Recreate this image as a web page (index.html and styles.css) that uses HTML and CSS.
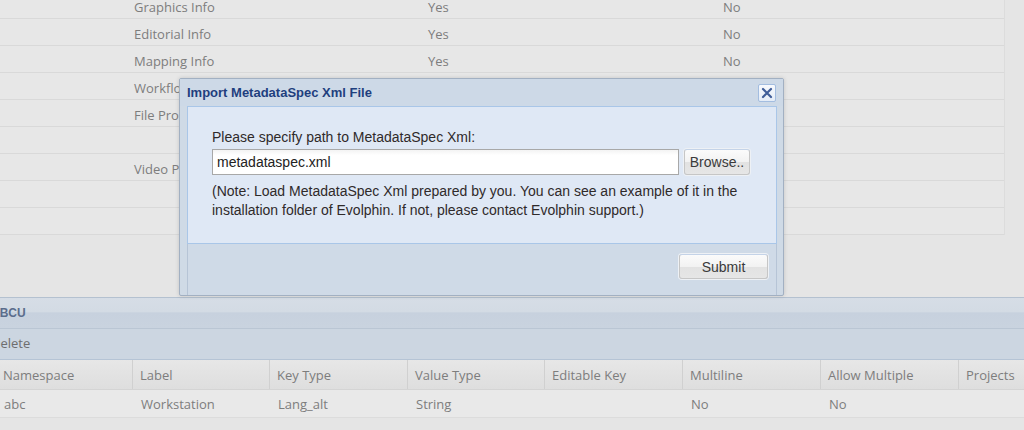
FILE: index.html
```html
<!DOCTYPE html>
<html>
<head>
<meta charset="utf-8">
<title>Import MetadataSpec Xml File</title>
<link rel="stylesheet" href="styles.css">
</head>
<body>
<div class="page">
  <div class="top">
    <div class="rows">
      <div class="row"><span></span><span>Graphics Info</span><span>Yes</span><span>No</span></div>
      <div class="row"><span></span><span>Editorial Info</span><span>Yes</span><span>No</span></div>
      <div class="row"><span></span><span>Mapping Info</span><span>Yes</span><span>No</span></div>
      <div class="row"><span></span><span class="under">Workflow Info</span><span></span><span></span></div>
      <div class="row"><span></span><span class="under">File Properties</span><span></span><span></span></div>
      <div class="row"><span></span><span></span><span></span><span></span></div>
      <div class="row"><span></span><span class="under">Video Properties</span><span></span><span></span></div>
      <div class="row"><span></span><span></span><span></span><span></span></div>
      <div class="row"><span></span><span></span><span></span><span></span></div>
    </div>
  </div>

  <div class="panel">
    <div class="panel-head"><span class="clip-a">ABCU</span></div>
    <div class="toolbar"><span class="clip-d">Delete</span></div>
    <div class="grid">
      <div class="grid-row head">
        <span>Namespace</span><span>Label</span><span>Key Type</span><span>Value Type</span><span>Editable Key</span><span>Multiline</span><span>Allow Multiple</span><span>Projects</span>
      </div>
      <div class="grid-row data">
        <span>abc</span><span>Workstation</span><span>Lang_alt</span><span>String</span><span></span><span>No</span><span>No</span><span></span>
      </div>
    </div>
  </div>
</div>

<div class="dialog">
  <div class="dlg-title">
    <span>Import MetadataSpec Xml File</span>
    <button class="dlg-close" aria-label="Close">
      <svg width="12" height="12" viewBox="0 0 12 12"><path d="M2 2 L10 10 M10 2 L2 10" stroke="#3f5d98" stroke-width="2.2" stroke-linecap="round"/></svg>
    </button>
  </div>
  <div class="dlg-frame">
    <div class="dlg-body">
      <div class="dlg-label">Please specify path to MetadataSpec Xml:</div>
      <div class="dlg-file">
        <div class="dlg-input">metadataspec.xml</div>
        <button class="btn btn-browse">Browse..</button>
      </div>
      <div class="dlg-note">(Note: Load MetadataSpec Xml prepared by you. You can see an example of it in the installation folder of Evolphin. If not, please contact Evolphin support.)</div>
    </div>
    <div class="dlg-foot">
      <button class="btn btn-submit">Submit</button>
    </div>
  </div>
</div>
</body>
</html>
```

FILE: styles.css
```css
html, body {
  margin: 0;
  padding: 0;
}
body {
  width: 1024px;
  height: 430px;
  overflow: hidden;
  background: #e5e5e5;
  font-family: "Open Sans", "Liberation Sans", sans-serif;
  font-size: 13px;
  color: #7d7d7d;
  position: relative;
}
.page {
  display: flex;
  flex-direction: column;
}
.top {
  height: 297px;
  overflow: hidden;
}
.rows {
  width: 1004px;
  margin-top: -8px;
  border-right: 1px solid #dcdcdc;
}
.row {
  display: grid;
  grid-template-columns: 127px 294px 295px 1fr;
  height: 26px;
  border-bottom: 1px solid #d9d9d9;
  background: #e7e7e7;
  align-items: center;
}
.row span {
  padding: 3px 0 0 7px;
  white-space: nowrap;
  overflow: hidden;
}
.row .under {
  max-width: 45px;
  padding-right: 0;
  text-overflow: clip;
}

.panel {
  border-top: 1px solid #b4c1d0;
}
.panel-head {
  height: 30px;
  background: linear-gradient(#d6dde6 0, #d3dbe4 45%, #c7d1de 50%, #c9d3df 100%);
  border-bottom: 1px solid #bac6d4;
  display: flex;
  align-items: center;
  font-family: "Liberation Sans", Arial, sans-serif;
  font-weight: bold;
  font-size: 12px;
  color: #5b6d8c;
  overflow: hidden;
}
.clip-a {
  margin-left: -9px;
}
.toolbar {
  height: 31px;
  box-sizing: border-box;
  padding-bottom: 3px;
  background: #ccd6e1;
  border-bottom: 1px solid #b5c4d5;
  display: flex;
  align-items: center;
  color: #6e6e6e;
  overflow: hidden;
}
.clip-d {
  margin-left: -9px;
}
.grid {
  margin-left: -4px;
}
.grid-row {
  display: grid;
  grid-template-columns: 137px 137px 138px 137px 138px 138px 138px 1fr;
  align-items: stretch;
}
.grid-row span {
  display: flex;
  align-items: center;
  padding-left: 7px;
  white-space: nowrap;
}
.head {
  height: 29px;
  background: linear-gradient(#e7e7e7, #dedede);
  border-bottom: 1px solid #d4d4d4;
}
.head span {
  border-right: 1px solid #d0d0d0;
}
.head span:last-child {
  border-right: 0;
}
.data {
  height: 27px;
  background: #e9e9e9;
  border-bottom: 1px solid #dcdcdc;
}
.data span {
  padding-left: 8px;
}

/* dialog */
.dialog {
  position: absolute;
  left: 179px;
  top: 78px;
  width: 603px;
  height: 216px;
  border: 1px solid #a2b0c2;
  border-radius: 2px;
  background: #cfdae6;
  box-shadow: 0 0 4px rgba(0, 0, 0, 0.15);
  display: flex;
  flex-direction: column;
  font-family: "Liberation Sans", Arial, sans-serif;
  color: #333;
}
.dlg-title {
  height: 27px;
  flex: none;
  display: flex;
  align-items: center;
  justify-content: space-between;
  padding: 0 7px 0 7px;
  font-weight: bold;
  font-size: 13px;
  color: #1f3f7e;
  background: #cdd9e7;
}
.dlg-close {
  width: 18px;
  height: 18px;
  padding: 0;
  margin: 0;
  border: 1px solid #a3bde0;
  border-radius: 2px;
  background: linear-gradient(#f7f9fd, #e4ecf7);
  display: flex;
  align-items: center;
  justify-content: center;
}
.dlg-frame {
  flex: 1;
  margin: 0 6px 0 7px;
  border-left: 1px solid #b6c4d6;
  border-right: 1px solid #b6c4d6;
  display: flex;
  flex-direction: column;
}
.dlg-body {
  height: 138px;
  flex: none;
  background: #dfe8f5;
  border: 1px solid #a9c6e8;
  margin: 0 -1px;
  padding: 21px 0 0 24px;
  box-sizing: border-box;
  font-size: 14px;
  color: #2f2a2a;
}
.dlg-label {
  line-height: 18px;
}
.dlg-file {
  display: flex;
  gap: 5px;
  margin-top: 3px;
}
.dlg-input {
  width: 461px;
  height: 24px;
  border: 1px solid #a8a8a8;
  background: linear-gradient(#f3f3f3, #ffffff 5px);
  line-height: 24px;
  padding-left: 4px;
  color: #222;
}
.btn {
  font-family: "Liberation Sans", Arial, sans-serif;
  font-size: 14px;
  color: #3a3a3a;
  border: 1px solid #c6c6c6;
  border-top-color: #c4d3e8;
  border-radius: 3px;
  background: linear-gradient(#fbfbfb 0, #f2f2f2 50%, #e2e2e2 51%, #e6e6e6 100%);
  box-shadow: 0 0 0 1px #eef1f5;
  padding: 0;
}
.btn-browse {
  width: 66px;
  height: 26px;
}
.dlg-note {
  width: 540px;
  line-height: 19px;
  margin-top: 7px;
}
.dlg-foot {
  flex: 1;
  display: flex;
  justify-content: flex-end;
  align-items: flex-start;
  padding: 10px 8px 0 0;
  background: #cfdae7;
}
.btn-submit {
  width: 89px;
  height: 25px;
}
```
